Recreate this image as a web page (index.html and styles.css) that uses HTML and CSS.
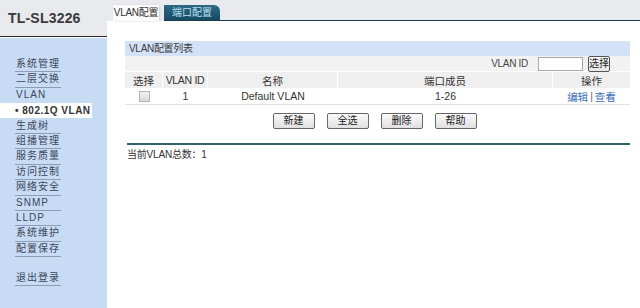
FILE: index.html
```html
<!DOCTYPE html>
<html lang="zh-CN">
<head>
<meta charset="utf-8">
<title>TL-SL3226</title>
<link rel="stylesheet" href="styles.css">
</head>
<body>
<div class="page">
  <aside class="side">
    <div class="brand">TL-SL3226</div>
    <ul class="nav">
      <li class="item">系统管理</li>
      <li class="item">二层交换</li>
      <li class="item plain">VLAN</li>
      <li class="item active">• 802.1Q VLAN</li>
      <li class="item">生成树</li>
      <li class="item">组播管理</li>
      <li class="item">服务质量</li>
      <li class="item">访问控制</li>
      <li class="item">网络安全</li>
      <li class="item">SNMP</li>
      <li class="item">LLDP</li>
      <li class="item">系统维护</li>
      <li class="item">配置保存</li>
      <li class="item logout">退出登录</li>
    </ul>
  </aside>
  <main class="main">
    <div class="tabs">
      <div class="tab tab-on">VLAN配置</div>
      <div class="tab tab-off">端口配置</div>
      <div class="tab-fill"></div>
    </div>
    <div class="content">
      <div class="panel">
        <div class="panel-head">VLAN配置列表</div>
        <div class="filter">
          <span class="filter-label">VLAN ID</span>
          <span class="input"></span>
          <span class="btn-small">选择</span>
        </div>
        <div class="row head-row">
          <div class="c c1">选择</div>
          <div class="c c2">VLAN ID</div>
          <div class="c c3">名称</div>
          <div class="c c4">端口成员</div>
          <div class="c c5">操作</div>
        </div>
        <div class="row data-row">
          <div class="c c1"><span class="check"></span></div>
          <div class="c c2">1</div>
          <div class="c c3">Default VLAN</div>
          <div class="c c4">1-26</div>
          <div class="c c5"><span class="link">编辑</span><span class="sep">|</span><span class="link">查看</span></div>
        </div>
        <div class="buttons">
          <span class="btn">新建</span>
          <span class="btn">全选</span>
          <span class="btn">删除</span>
          <span class="btn">帮助</span>
        </div>
        <div class="rule"></div>
        <div class="total">当前VLAN总数：1</div>
      </div>
    </div>
  </main>
</div>
</body>
</html>
```
FILE: styles.css
```css
* { box-sizing: border-box; }
html, body { margin: 0; padding: 0; }
body {
  width: 640px;
  height: 308px;
  overflow: hidden;
  background: #ffffff;
  font-family: "Liberation Sans", "Noto Sans CJK SC", sans-serif;
  font-size: 11px;
  color: #333;
  white-space: nowrap;
}
.page {
  display: grid;
  grid-template-columns: 107px 1fr;
  height: 308px;
}
.side {
  display: flex;
  flex-direction: column;
  background: #c7dbf5;
}
.brand {
  height: 37px;
  background: #e8eaed;
  border-bottom: 1px solid #2a2a2a;
  padding: 10px 0 0 8px;
  font-family: "Liberation Sans", sans-serif;
  font-weight: bold;
  font-size: 14px;
  color: #3a3a3a;
  letter-spacing: 0.2px;
  margin-bottom: 1px;
  box-shadow: 0 1px 0 #ffffff;
}
.nav {
  list-style: none;
  margin: 0;
  padding: 19px 0 0 0;
}
.item {
  width: 46px;
  margin-left: 15px;
  height: 15.4px;
  line-height: 14px;
  padding-left: 1px;
  border-bottom: 1px solid #8f9db3;
  font-family: "Liberation Sans", "Noto Sans CJK SC", sans-serif;
  font-size: 10px;
  letter-spacing: 1px;
  color: #3c4656;
}
.item.plain { border-bottom-color: transparent; }
.item.active {
  width: 92px;
  margin-left: 0;
  padding-left: 15px;
  background: #ffffff;
  border-bottom: 1px solid #c7dbf5;
  font-weight: bold;
  font-size: 10px;
  letter-spacing: 0.5px;
  color: #333;
  line-height: 15px;
  height: 15.4px;
}
.item.logout { margin-top: 14px; }

.main { display: flex; flex-direction: column; }
.tabs {
  display: flex;
  align-items: flex-end;
  height: 21px;
  background: #e8eaed;
}
.tab {
  height: 16px;
  line-height: 15px;
  font-size: 10px;
  padding: 0;
}
.tab-on {
  margin-left: 6px;
  width: 46px;
  background: #fbfbfb;
  color: #333;
  box-shadow: 1px 0 2px #cfd2d6;
  text-align: center;
  letter-spacing: -0.3px;
}
.tab-off {
  margin-left: 5px;
  width: 56px;
  background: linear-gradient(#2b6a86, #174a63);
  color: #bfe0f0;
  text-align: center;
  border-radius: 0 6px 0 0;
  border-bottom: 1px solid #1b3a4d;
}
.tab-fill {
  flex: 1;
  border-bottom: 1px solid #1b3a4d;
}
.content {
  flex: 1;
  padding: 20px 10px 0 18px;
}
.panel { width: 505px; }
.panel-head {
  height: 15px;
  line-height: 15px;
  background: #d3e2f6;
  padding-left: 4px;
  font-size: 10px;
  color: #3c3c3c;
  letter-spacing: -0.3px;
}
.filter {
  display: flex;
  align-items: center;
  justify-content: flex-end;
  height: 16px;
  background: #f2f2f2;
  padding-right: 20px;
  border-bottom: 1px solid #ffffff;
}
.filter-label { font-size: 10px; color: #444; margin-right: 10px; letter-spacing: -0.3px; }
.input {
  width: 45px;
  height: 14px;
  background: #fff;
  border: 1px solid #a9a9a9;
}
.btn-small {
  margin-left: 5px;
  width: 22px;
  height: 16px;
  line-height: 14px;
  text-align: center;
  border: 1px solid #555;
  border-radius: 2px;
  background: linear-gradient(#ffffff, #e6e6e6);
  font-size: 10px;
  color: #222;
}
.row { display: flex; height: 16px; }
.head-row { background: #efefef; }
.data-row { background: #fff; border-bottom: 1px solid #e2e2e2; height: 17px; }
.c {
  display: flex;
  align-items: center;
  justify-content: center;
  font-size: 10.5px;
  color: #333;
}
.head-row .c { border-right: 1px solid #ffffff; }
.head-row .c5 { border-right: none; }
.c1 { width: 38px; }
.c2 { width: 45px; }
.c3 { width: 130px; }
.c4 { width: 215px; }
.c5 { width: 77px; }
.head-row .c2 { letter-spacing: -0.3px; }
.check {
  width: 11px;
  height: 11px;
  border: 1px solid #b3b3b3;
  background: linear-gradient(#f2f2f2, #d8d8d8);
}
.link { color: #3d71b8; }
.sep { color: #666; margin: 0 2px; }
.buttons {
  display: flex;
  justify-content: center;
  gap: 12px;
  margin-top: 8px;
  padding-right: 6px;
}
.btn {
  width: 42px;
  height: 16px;
  line-height: 14px;
  text-align: center;
  border: 1px solid #666;
  border-radius: 2px;
  background: linear-gradient(#fbfbfb, #e0e0e0);
  font-size: 10px;
  color: #222;
}
.rule {
  margin-top: 14px;
  margin-left: 2px;
  height: 2px;
  background: #35606f;
}
.total {
  margin-top: 1px;
  padding-left: 2px;
  font-size: 10px;
  color: #333;
  letter-spacing: -0.2px;
}
```
